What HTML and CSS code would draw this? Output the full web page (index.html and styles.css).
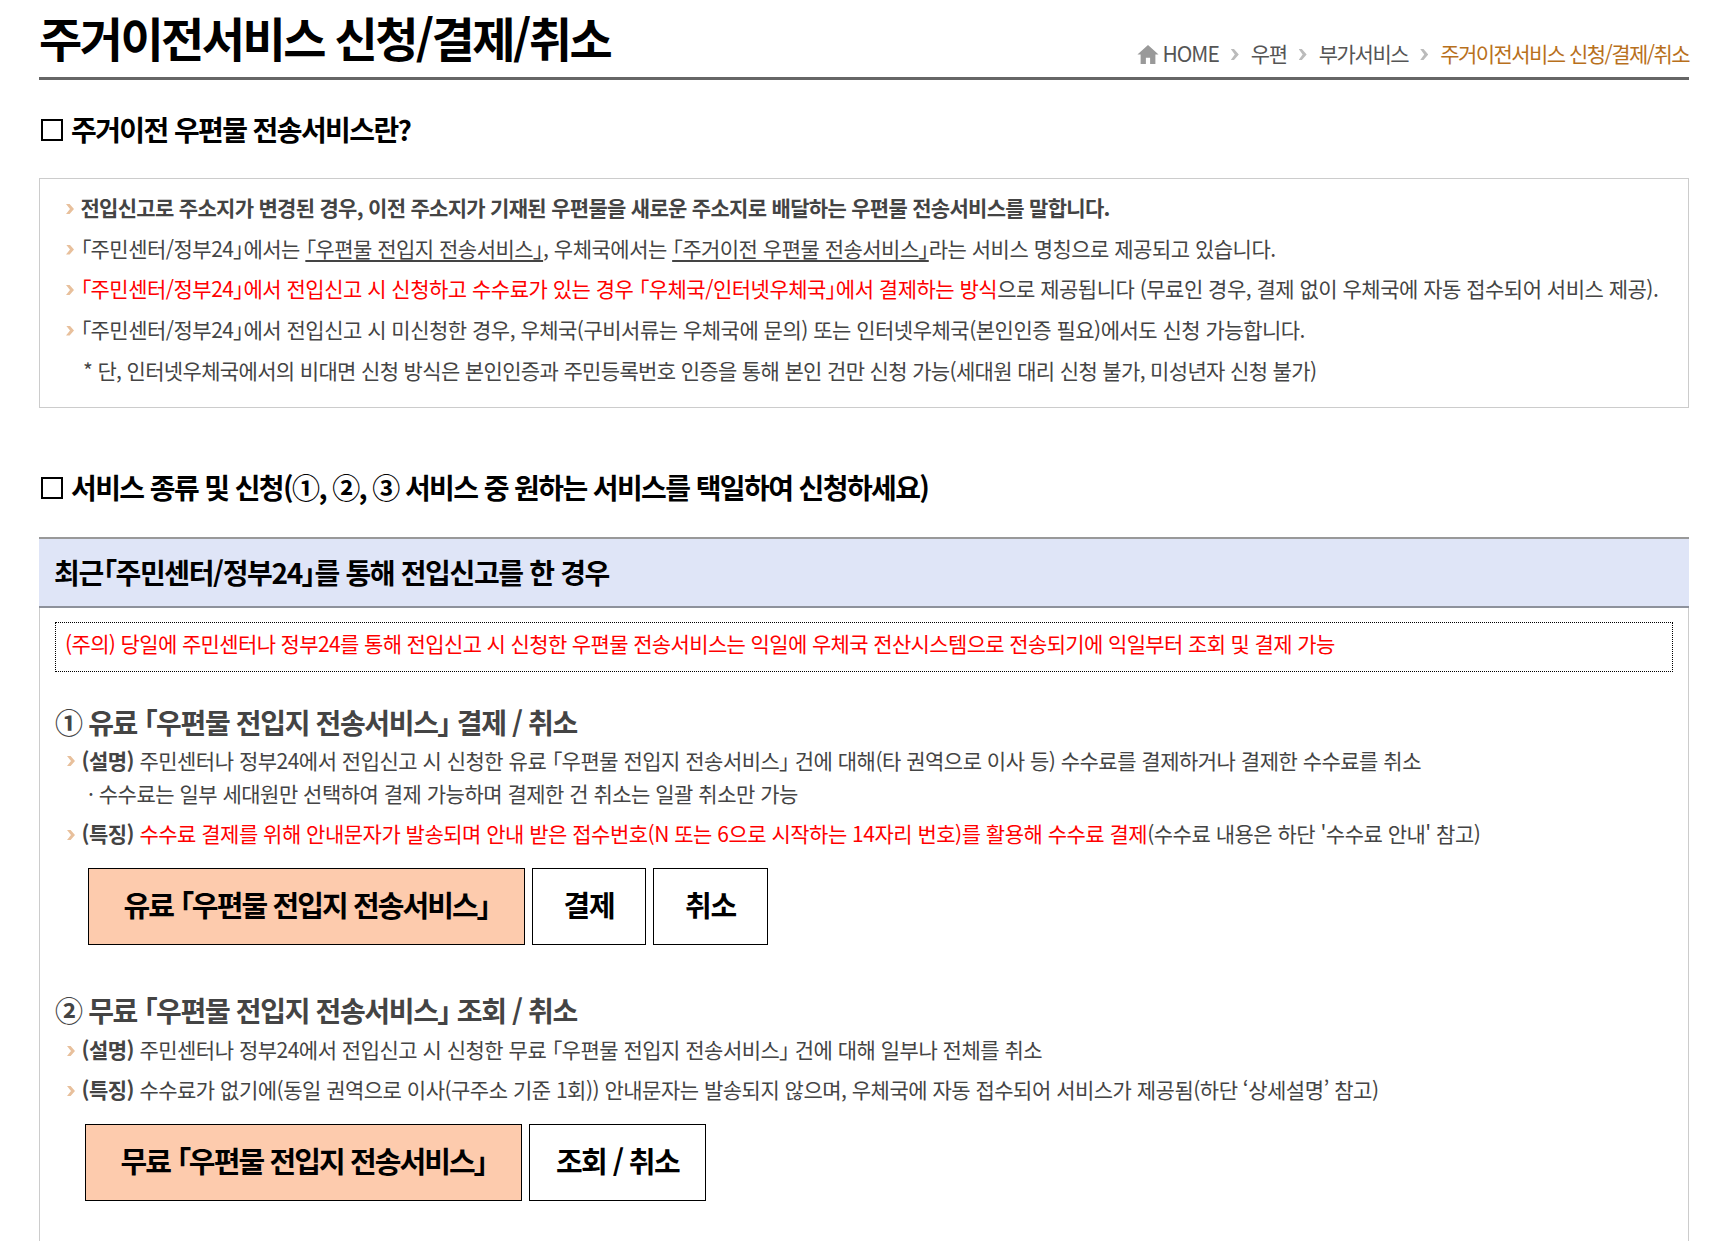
FILE: index.html
```html
<!DOCTYPE html>
<html lang="ko">
<head>
<meta charset="utf-8">
<title>주거이전서비스 신청/결제/취소</title>
<link rel="stylesheet" href="styles.css">
</head>
<body>
<div class="page">
  <header class="top">
    <h1 class="title">주거이전서비스 신청/결제/취소</h1>
    <nav class="crumbs">
      <svg class="home" viewBox="0 0 20 18" width="22" height="19"><path d="M10 0 L20 9 L17 9 L17 18 L12 18 L12 12 L8 12 L8 18 L3 18 L3 9 L0 9 Z" fill="#999"/></svg>
      <span class="crumb-home">HOME</span><i class="sep"></i><span>우편</span><i class="sep"></i><span>부가서비스</span><i class="sep"></i><span class="here">주거이전서비스 신청/결제/취소</span>
    </nav>
  </header>

  <h2 class="sec sec-a"><i class="sq"></i>주거이전 우편물 전송서비스란?</h2>
  <ul class="box">
    <li class="item strong">전입신고로 주소지가 변경된 경우, 이전 주소지가 기재된 우편물을 새로운 주소지로 배달하는 우편물 전송서비스를 말합니다.</li>
    <li class="item">「주민센터/정부24」에서는 <u>「우편물 전입지 전송서비스」</u>, 우체국에서는 <u>「주거이전 우편물 전송서비스」</u>라는 서비스 명칭으로 제공되고 있습니다.</li>
    <li class="item"><em>「주민센터/정부24」에서 전입신고 시 신청하고 수수료가 있는 경우 「우체국/인터넷우체국」에서 결제하는 방식</em>으로 제공됩니다 (무료인 경우, 결제 없이 우체국에 자동 접수되어 서비스 제공).</li>
    <li class="item">「주민센터/정부24」에서 전입신고 시 미신청한 경우, 우체국(구비서류는 우체국에 문의) 또는 인터넷우체국(본인인증 필요)에서도 신청 가능합니다.</li>
    <li class="item plain note">* 단, 인터넷우체국에서의 비대면 신청 방식은 본인인증과 주민등록번호 인증을 통해 본인 건만 신청 가능(세대원 대리 신청 불가, 미성년자 신청 불가)</li>
  </ul>

  <h2 class="sec sec-b"><i class="sq"></i>서비스 종류 및 신청(①, ②, ③ 서비스 중 원하는 서비스를 택일하여 신청하세요)</h2>
  <section class="panel">
    <h3 class="panel-head">최근「주민센터/정부24」를 통해 전입신고를 한 경우</h3>
    <div class="panel-body">
      <p class="notice">(주의) 당일에 주민센터나 정부24를 통해 전입신고 시 신청한 우편물 전송서비스는 익일에 우체국 전산시스템으로 전송되기에 익일부터 조회 및 결제 가능</p>

      <h4 class="opt">① 유료 「우편물 전입지 전송서비스」 결제 / 취소</h4>
      <ul class="list">
        <li class="item tight"><b>(설명)</b> 주민센터나 정부24에서 전입신고 시 신청한 유료 「우편물 전입지 전송서비스」 건에 대해(타 권역으로 이사 등) 수수료를 결제하거나 결제한 수수료를 취소</li>
        <li class="item plain sub">· 수수료는 일부 세대원만 선택하여 결제 가능하며 결제한 건 취소는 일괄 취소만 가능</li>
        <li class="item"><b>(특징)</b> <em>수수료 결제를 위해 안내문자가 발송되며 안내 받은 접수번호(N 또는 6으로 시작하는 14자리 번호)를 활용해 수수료 결제</em>(수수료 내용은 하단 '수수료 안내' 참고)</li>
      </ul>
      <div class="btns btns-a">
        <a class="btn main">유료 「우편물 전입지 전송서비스」</a>
        <a class="btn small">결제</a>
        <a class="btn small">취소</a>
      </div>

      <h4 class="opt opt-2">② 무료 「우편물 전입지 전송서비스」 조회 / 취소</h4>
      <ul class="list list-2">
        <li class="item"><b>(설명)</b> 주민센터나 정부24에서 전입신고 시 신청한 무료 「우편물 전입지 전송서비스」 건에 대해 일부나 전체를 취소</li>
        <li class="item"><b>(특징)</b> 수수료가 없기에(동일 권역으로 이사(구주소 기준 1회)) 안내문자는 발송되지 않으며, 우체국에 자동 접수되어 서비스가 제공됨(하단 ‘상세설명’ 참고)</li>
      </ul>
      <div class="btns btns-b">
        <a class="btn main">무료 「우편물 전입지 전송서비스」</a>
        <a class="btn wide">조회 / 취소</a>
      </div>
    </div>
  </section>
</div>
</body>
</html>
```
FILE: styles.css
```css
* { box-sizing: border-box; }
html, body { margin: 0; padding: 0; background: #fff; }
body {
  height: 1241px;
  overflow: hidden;
  font-family: "Noto Sans CJK KR", "Noto Sans", sans-serif;
  font-feature-settings: "palt";
  color: #444;
}
ul { list-style: none; margin: 0; padding: 0; }
h1, h2, h3, h4, p { margin: 0; }
em { font-style: normal; color: #f00; }
.page { margin: 0 39px; }

.top {
  height: 80px;
  border-bottom: 3px solid #666;
  display: flex;
  justify-content: space-between;
  align-items: flex-end;
}
.title {
  font-size: 47px;
  line-height: 60px;
  font-weight: 700;
  letter-spacing: -2.55px;
  color: #000;
  margin-bottom: 10px;
}
.crumbs {
  display: flex;
  align-items: center;
  font-size: 21px;
  line-height: 28px;
  letter-spacing: -1.4px;
  color: #555;
  margin-bottom: 10px;
}
.home { margin-right: 4px; margin-top: 3px; }
.crumb-home { letter-spacing: -1px; }
.here { color: #b8701c; letter-spacing: -1.55px; }
.sep {
  width: 8px;
  height: 11px;
  margin: 3px 12px 0 12px;
  background: #bbb;
  clip-path: polygon(0 0, 40% 0, 100% 50%, 40% 100%, 0 100%, 50% 50%);
}

.sec {
  display: flex;
  align-items: center;
  font-size: 28px;
  line-height: 38px;
  font-weight: 700;
  letter-spacing: -1.6px;
  color: #000;
}
.sq {
  width: 22px;
  height: 22px;
  border: 2px solid #000;
  margin: 2px 8px 0 2px;
  flex: none;
}
.sec-a { margin-top: 30px; }
.sec-b { margin-top: 60px; }

.box {
  margin-top: 30px;
  height: 230px;
  border: 1px solid #ccc;
  padding: 8px 0 0 25px;
}
.item {
  position: relative;
  padding-left: 15.5px;
  font-size: 21px;
  line-height: 40.5px;
  letter-spacing: -0.5px;
  white-space: nowrap;
}
.item::before {
  content: "";
  position: absolute;
  left: 1px;
  top: 17px;
  width: 8px;
  height: 10px;
  background: #e8c09c;
  clip-path: polygon(0 0, 45% 0, 100% 50%, 45% 100%, 0 100%, 50% 50%);
}
.item.plain::before { display: none; }
.strong { font-weight: 700; letter-spacing: -0.7px; }
.note { padding-left: 18px; margin-top: 1px; letter-spacing: -0.65px; }
.item u { text-underline-offset: 3px; }
.item b { font-weight: 700; }

.panel {
  margin-top: 31px;
  border-left: 1px solid #ccc;
  border-right: 1px solid #ccc;
  height: 704px;
}
.panel-head {
  height: 71px;
  margin-left: -1px;
  margin-right: -1px;
  background: #dfe5f7;
  border-top: 2px solid #999;
  border-bottom: 2px solid #8e929c;
  padding-left: 15px;
  font-size: 28px;
  line-height: 67px;
  font-weight: 700;
  letter-spacing: -1.35px;
  color: #000;
}
.panel-body { padding: 14px 15px 0 15px; }
.notice {
  height: 50px;
  border: 1px dotted #000;
  padding-left: 9px;
  font-size: 21px;
  line-height: 41px;
  letter-spacing: -0.63px;
  color: #f00;
}
.opt {
  margin-top: 29px;
  font-size: 28px;
  line-height: 42px;
  font-weight: 700;
  letter-spacing: -1.35px;
  color: #444;
}
.opt-2 { margin-top: 44px; }
.list { padding-left: 11px; }
.list-2 { margin-top: -2px; }
.list .item { line-height: 40px; }
.list .tight { line-height: 32px; height: 33px; margin-top: 1px; }
.list .tight::before { top: 12px; }
.list .sub { line-height: 33px; }
.item.sub { padding-left: 22px; }
.list .sub + .item { margin-top: 3px; }

.btns { display: flex; gap: 7px; }
.btns-a { margin: 15px 0 0 33px; }
.btns-b { margin: 15px 0 0 30px; }
.btn {
  height: 77px;
  border: 1px solid #000;
  display: flex;
  align-items: center;
  justify-content: center;
  font-size: 29px;
  font-weight: 700;
  letter-spacing: -1.2px;
  color: #000;
  padding-bottom: 6px;
}
.main { width: 437px; background: #fdcbad; letter-spacing: -1.9px; }
.small { width: 114px; }
.small:last-child { width: 115px; }
.wide { width: 177px; letter-spacing: -1.6px; }
```
